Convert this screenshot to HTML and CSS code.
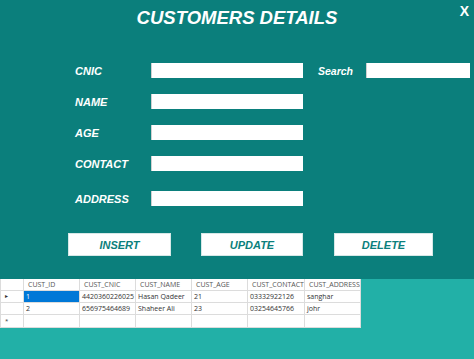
FILE: index.html
```html
<!DOCTYPE html>
<html lang="en">
<head>
  <meta charset="UTF-8">
  <title>Customers Details</title>
  <link rel="stylesheet" href="styles.css">
</head>
<body>
  <div class="panel">
    <div class="header">
      <h1>CUSTOMERS DETAILS</h1>
      <span class="close">X</span>
    </div>

    <form class="fields">
      <div class="row">
        <label>CNIC</label>
        <input type="text" class="field">
        <label class="search-label">Search</label>
        <input type="text" class="search">
      </div>
      <div class="row">
        <label>NAME</label>
        <input type="text" class="field">
      </div>
      <div class="row">
        <label>AGE</label>
        <input type="text" class="field">
      </div>
      <div class="row">
        <label>CONTACT</label>
        <input type="text" class="field">
      </div>
      <div class="row row-last">
        <label>ADDRESS</label>
        <input type="text" class="field">
      </div>

      <div class="buttons">
        <button type="button" class="btn btn-insert">INSERT</button>
        <button type="button" class="btn btn-update">UPDATE</button>
        <button type="button" class="btn btn-delete">DELETE</button>
      </div>
    </form>
  </div>

  <div class="bottom">
    <table class="grid">
      <colgroup>
        <col class="c-head">
        <col class="c-id">
        <col class="c-cnic">
        <col class="c-name">
        <col class="c-age">
        <col class="c-contact">
        <col class="c-address">
      </colgroup>
      <tr class="head-row">
        <th></th>
        <th>CUST_ID</th>
        <th>CUST_CNIC</th>
        <th>CUST_NAME</th>
        <th>CUST_AGE</th>
        <th>CUST_CONTACT</th>
        <th>CUST_ADDRESS</th>
      </tr>
      <tr>
        <td class="marker">&#9656;</td>
        <td class="selected">1</td>
        <td>4420360226025</td>
        <td>Hasan Qadeer</td>
        <td>21</td>
        <td>03332922126</td>
        <td>sanghar</td>
      </tr>
      <tr>
        <td class="marker"></td>
        <td>2</td>
        <td>656975464689</td>
        <td>Shaheer Ali</td>
        <td>23</td>
        <td>03254645766</td>
        <td>johr</td>
      </tr>
      <tr class="new-row">
        <td class="marker">*</td>
        <td></td>
        <td></td>
        <td></td>
        <td></td>
        <td></td>
        <td></td>
      </tr>
    </table>
  </div>
</body>
</html>
```

FILE: styles.css
```css
body {
  margin: 0;
  font-family: "Liberation Sans", Arial, sans-serif;
  background: #22b0a7;
  width: 474px;
  height: 359px;
  overflow: hidden;
}
.panel {
  background: #0b7f7c;
  height: 279px;
  box-sizing: border-box;
}
.header {
  position: relative;
  height: 40px;
}
h1 {
  margin: 0;
  padding-top: 7px;
  text-align: center;
  color: white;
  font-size: 18.5px;
  font-style: italic;
  font-weight: bold;
}
.close {
  position: absolute;
  right: 5px;
  top: 3px;
  color: white;
  font-size: 14px;
  font-weight: bold;
}
.fields {
  display: flex;
  flex-direction: column;
  margin: 0;
  padding-top: 23px;
}
.row {
  display: flex;
  align-items: center;
  height: 15px;
  margin-bottom: 16px;
  padding-left: 75px;
}
.row-last {
  margin-top: 4px;
}
label {
  width: 76px;
  color: white;
  font-size: 11px;
  font-style: italic;
  font-weight: bold;
}
.field, .search {
  height: 15px;
  box-sizing: border-box;
  border: none;
  border-left: 1px solid #d0d0d0;
  background: white;
  padding: 0;
  margin: 0;
}
.field {
  width: 152px;
}
.search-label {
  width: auto;
  margin-left: 15px;
  margin-right: 13px;
  font-size: 10.5px;
}
.search {
  width: 104px;
}
.buttons {
  display: flex;
  padding-left: 68px;
  margin-top: 11px;
}
.btn {
  height: 23px;
  border: 1px solid #d6e8e7;
  background: white;
  color: #0b7f7c;
  font-family: "Liberation Sans", Arial, sans-serif;
  font-size: 11px;
  font-style: italic;
  font-weight: bold;
  padding: 0;
}
.btn-insert {
  width: 103px;
}
.btn-update {
  width: 102px;
  margin-left: 30px;
}
.btn-delete {
  width: 99px;
  margin-left: 31px;
}
.bottom {
  height: 80px;
}
.grid {
  border-collapse: collapse;
  table-layout: fixed;
  width: 360px;
  background: white;
  font-family: "Open Sans", "Noto Sans", sans-serif;
  font-size: 7px;
  color: #333;
}
.c-head { width: 23px; }
.c-id { width: 56px; }
.c-cnic { width: 56px; }
.c-name { width: 56px; }
.c-age { width: 56px; }
.c-contact { width: 57px; }
.c-address { width: 56px; }
.grid th, .grid td {
  border: 1px solid #dcdcdc;
  padding: 0 0 0 2px;
  text-align: left;
  white-space: nowrap;
  overflow: hidden;
  height: 11px;
  line-height: 11px;
}
.grid th {
  font-weight: normal;
  padding-left: 4px;
  color: #555;
}
.head-row th {
  border-top: none;
}
.grid .marker {
  font-size: 6px;
  padding-left: 4px;
  color: #333;
}
.grid .selected {
  background: #0078d7;
  color: white;
}
.new-row td {
  height: 12px;
}
```
